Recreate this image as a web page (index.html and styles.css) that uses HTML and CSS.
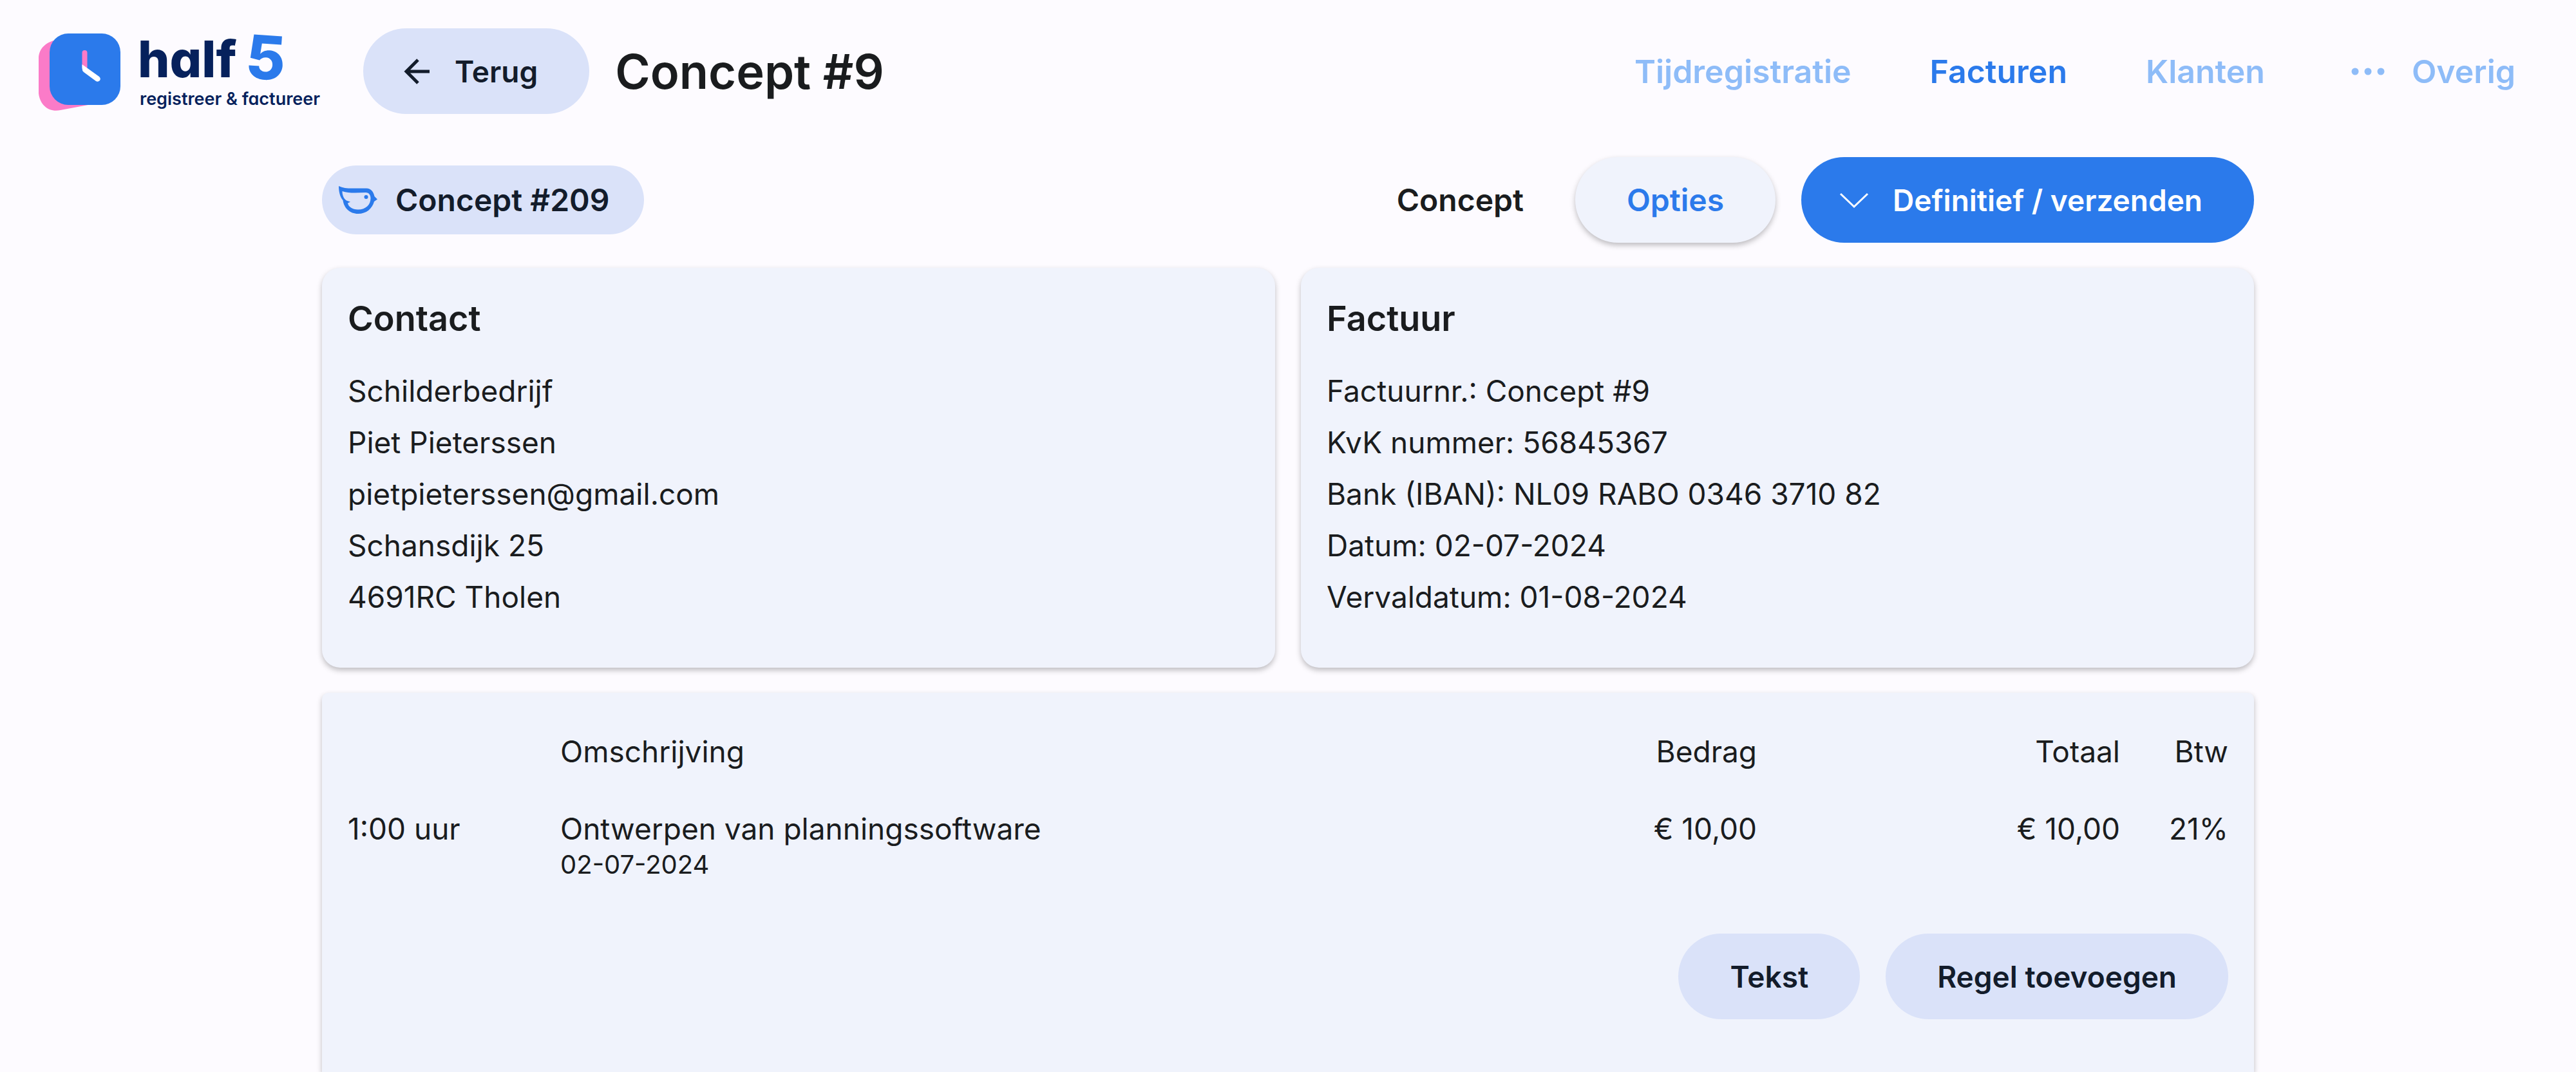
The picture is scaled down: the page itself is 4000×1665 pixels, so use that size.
FILE: index.html
```html
<!DOCTYPE html>
<html lang="nl">
<head>
    <meta charset="UTF-8">
    <meta name="viewport" content="width=device-width, initial-scale=1.0">
    <title>Concept #9 - half5</title>
    <link rel="stylesheet" href="styles.css">
</head>
<body>
    <header class="header">
        <a class="logo" href="#" aria-label="half5 registreer en factureer">
            <svg width="444" height="133" viewBox="60 44 444 133">
                <path fill="#fb7bc8" d="M92 61 C72 64 60 75 60 91 V145 C62 164 77 175 94 171 L142 162 L120 70 Z"/>
                <rect x="77" y="52" width="110" height="111" rx="29" fill="#2b7aeb"/>
                <path d="M131.500 82 V104" stroke="#fb7bc8" stroke-width="8" stroke-linecap="round"/>
                <path fill="#fff" d="M127.500 100 L154 119 Q157 122 155 125 Q152 128 149 126 L130 112 Q127.500 110 127.500 106 Z"/>
                <text class="logo-name" x="214" y="120">half</text>
                <text class="logo-five" x="382" y="123" transform="rotate(4 410 90)">5</text>
                <text class="logo-sub" x="217" y="163">registreer &amp; factureer</text>
            </svg>
        </a>
        <button class="button back">
            <svg width="40" height="40" viewBox="0 0 40 40" fill="none" stroke="currentColor" stroke-width="5">
                <path d="M39 20 H4 M21 2 L3 20 L21 38"/>
            </svg>
            Terug
        </button>
        <h1>Concept #9</h1>
        <nav class="nav">
            <a href="#">Tijdregistratie</a>
            <a href="#" class="active">Facturen</a>
            <a href="#">Klanten</a>
            <a href="#" class="more">
                <svg width="52" height="12" viewBox="0 0 52 12" fill="currentColor">
                    <circle cx="6" cy="6" r="5.500"/>
                    <circle cx="26" cy="6" r="5.500"/>
                    <circle cx="46" cy="6" r="5.500"/>
                </svg>
                Overig
            </a>
        </nav>
    </header>

    <main class="container">
        <div class="toolbar">
            <a class="chip" href="#">
                <svg width="60" height="44" viewBox="527 287 60 44" fill="#2b7aeb">
                    <path fill-rule="evenodd" d="M527 287 C533 290 540 290.500 547 290.500 H569 C577 290 581 296 582.500 303 L587 307.500 L582 311 C579 322 570 330 557 330 C544 330 535 321 533.500 309 C529 304 527 296 527 287 Z M532.500 295 C538 297 545 297.500 552 297.500 L569 297 C574 297 576.500 301 576.500 306 C576.500 316 569 323.500 557 323.500 C548 323.500 542 319 541 313.500 L545 311.500 L539 309.500 C534 306 532.500 300 532.500 295 Z"/>
                    <circle cx="569.500" cy="304" r="3"/>
                </svg>
                Concept #209
            </a>
            <span class="state">Concept</span>
            <button class="button light">Opties</button>
            <button class="button primary">
                <svg width="44" height="24" viewBox="0 0 44 24" fill="none" stroke="currentColor" stroke-width="3">
                    <path d="M1 2 L22 22 L43 2"/>
                </svg>
                Definitief / verzenden
            </button>
        </div>

        <div class="cards">
            <section class="card">
                <h2>Contact</h2>
                <p>Schilderbedrijf</p>
                <p>Piet Pieterssen</p>
                <p>pietpieterssen@gmail.com</p>
                <p>Schansdijk 25</p>
                <p>4691RC Tholen</p>
            </section>
            <section class="card">
                <h2>Factuur</h2>
                <p>Factuurnr.: Concept #9</p>
                <p>KvK nummer: 56845367</p>
                <p>Bank (IBAN): NL09 RABO 0346 3710 82</p>
                <p>Datum: 02-07-2024</p>
                <p>Vervaldatum: 01-08-2024</p>
            </section>
        </div>

        <section class="lines">
            <table>
                <thead>
                    <tr>
                        <th class="hours"></th>
                        <th>Omschrijving</th>
                        <th class="amount">Bedrag</th>
                        <th class="amount">Totaal</th>
                        <th class="vat">Btw</th>
                    </tr>
                </thead>
                <tbody>
                    <tr>
                        <td>1:00 uur</td>
                        <td>Ontwerpen van planningssoftware<div class="date">02-07-2024</div></td>
                        <td class="amount">€ 10,00</td>
                        <td class="amount">€ 10,00</td>
                        <td class="vat">21%</td>
                    </tr>
                </tbody>
            </table>
            <div class="actions">
                <button class="button">Tekst</button>
                <button class="button">Regel toevoegen</button>
            </div>
        </section>
    </main>
</body>
</html>
```

FILE: styles.css
```css
* {
    box-sizing: border-box;
}
body {
    margin: 0;
    min-height: 100vh;
    display: flex;
    flex-direction: column;
    background: #fdfbff;
    color: #1a1c1e;
    font-family: Inter, "Liberation Sans", sans-serif;
    font-size: 46px;
    line-height: 56px;
}
h1, h2, p {
    margin: 0;
}
a {
    color: inherit;
    text-decoration: none;
}
svg {
    display: block;
    flex: none;
    overflow: visible;
}

/* header */
.header {
    display: flex;
    align-items: center;
    padding: 44px 94px 44px 60px;
}
.logo-name, .logo-five, .logo-sub {
    font-family: Inter, sans-serif;
    font-feature-settings: "cv11";
    fill: #06215c;
}
.logo-name {
    font-size: 78px;
    font-weight: 800;
}
.logo-five {
    font-size: 94px;
    font-weight: 800;
    fill: #2b7aeb;
}
.logo-sub {
    font-size: 27px;
    font-weight: 600;
}
.header h1 {
    margin-left: 40px;
    font-size: 74px;
    line-height: 80px;
    font-weight: 600;
}
.nav {
    display: flex;
    gap: 122px;
    margin-left: auto;
    color: #8ebcf8;
    font-size: 50px;
    font-weight: 600;
}
.nav .active {
    color: #2b7aeb;
}
.more {
    display: flex;
    align-items: center;
    gap: 42px;
    padding-left: 12px;
}

/* buttons */
.button {
    display: flex;
    align-items: center;
    gap: 38px;
    height: 133px;
    padding: 0 80px;
    border: none;
    border-radius: 67px;
    background: #dae2f9;
    color: #131c2b;
    font: inherit;
    font-weight: 600;
    cursor: pointer;
}
.back {
    margin-left: 60px;
    padding-left: 64px;
}
.light {
    background: #f0f3fc;
    color: #2b7aeb;
    font-size: 48px;
    box-shadow: 0 4px 8px rgba(0,0,0,0.25);
}
.primary {
    padding-left: 60px;
    background: #2b7aeb;
    color: white;
}

.container {
    flex: 1;
    display: flex;
    flex-direction: column;
    gap: 39px;
    width: 75%;
    margin: 0 auto;
    padding-top: 23px;
}
.toolbar {
    display: flex;
    align-items: center;
    gap: 40px;
}
.chip {
    display: flex;
    align-items: center;
    gap: 28px;
    height: 107px;
    margin-right: auto;
    padding: 0 54px 0 26px;
    border-radius: 54px;
    background: #dae2f9;
    color: #131c2b;
    font-size: 48px;
    font-weight: 600;
}
.state {
    margin-right: 40px;
    font-size: 48px;
    font-weight: 600;
}

/* contact and invoice details */
.cards {
    display: grid;
    grid-template-columns: 1fr 1fr;
    gap: 40px;
}
.card {
    padding: 47px 40px 70px;
    border-radius: 28px;
    background: #f0f3fc;
    box-shadow: 0 4px 8px rgba(0,0,0,0.25);
}
.card h2 {
    margin-bottom: 40px;
    font-size: 54px;
    line-height: 64px;
    font-weight: 600;
}
.card p {
    line-height: 80px;
}

/* invoice lines */
.lines {
    flex: 1;
    padding: 31px 40px 40px;
    border-radius: 10px 10px 0 0;
    background: #f0f3fc;
    box-shadow: 0 4px 8px rgba(0,0,0,0.25);
}
table {
    width: 100%;
    table-layout: fixed;
    border-collapse: collapse;
}
th, td {
    padding: 32px 0;
    text-align: left;
    vertical-align: top;
    font-weight: 400;
}
.hours {
    width: 330px;
}
.amount {
    width: 564px;
    text-align: right;
}
.vat {
    width: 168px;
    text-align: right;
}
.date {
    font-size: 40px;
}
.actions {
    display: flex;
    justify-content: flex-end;
    gap: 40px;
    margin-top: 47px;
}
```
